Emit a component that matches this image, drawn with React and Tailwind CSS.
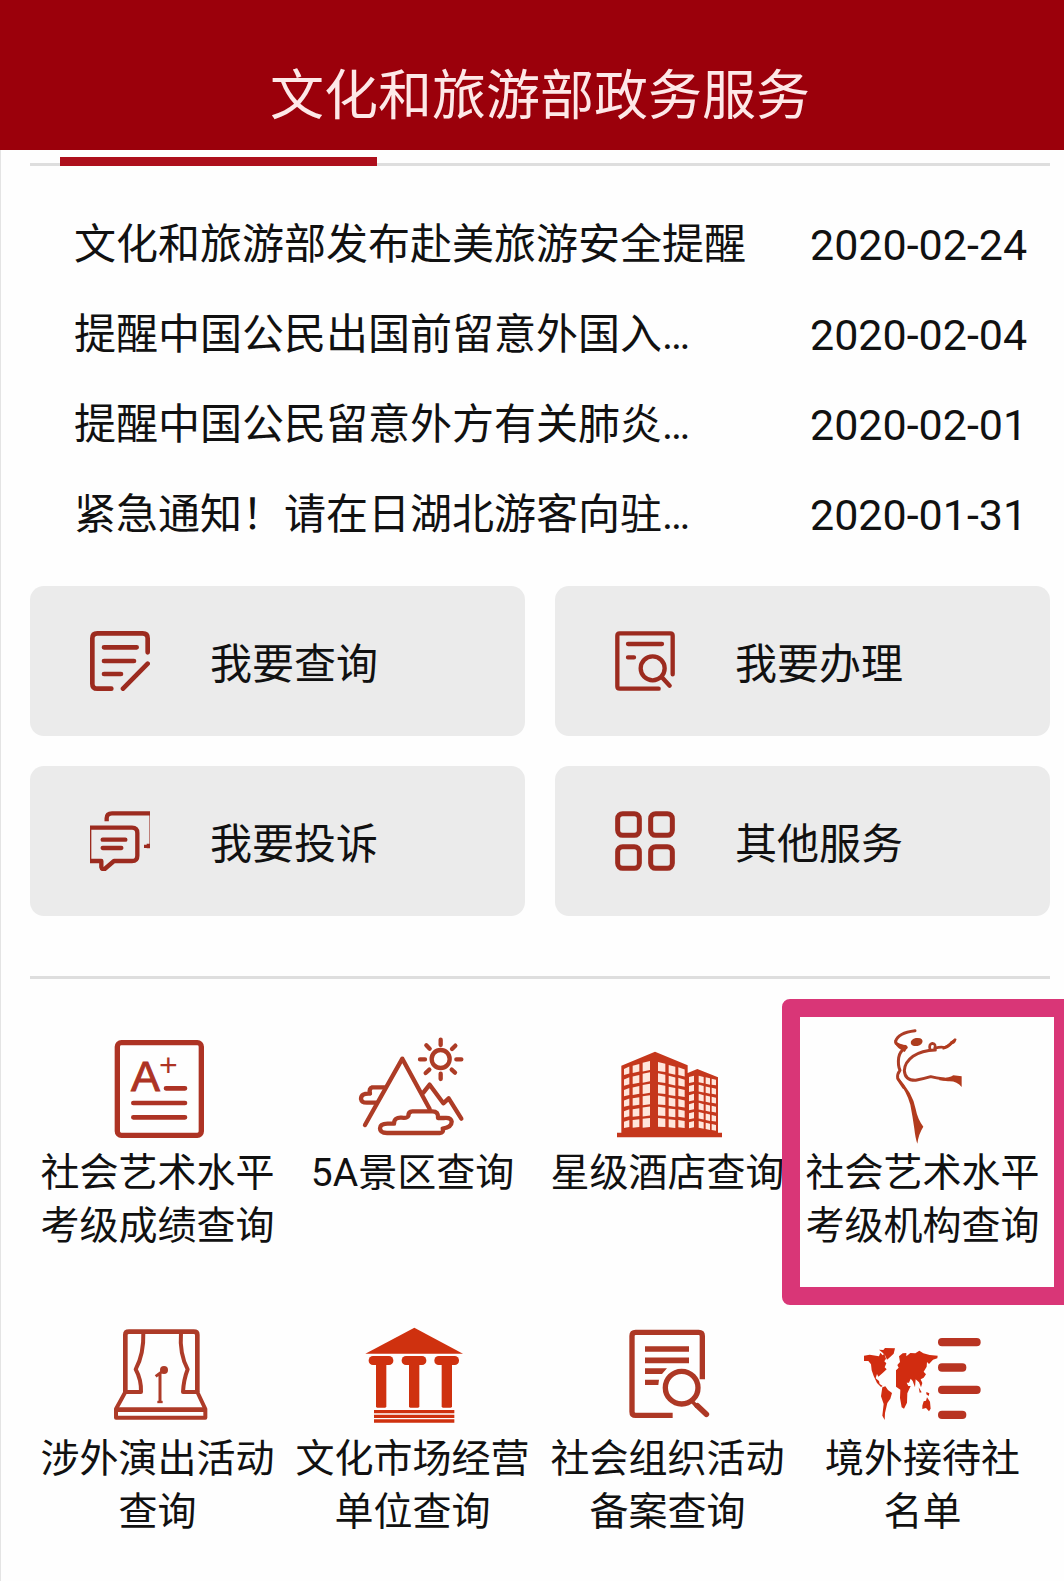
const FONT = "font-['Roboto','Noto_Sans_CJK_SC',sans-serif]";

const notices = [
  { title: "文化和旅游部发布赴美旅游安全提醒", date: "2020-02-24" },
  { title: "提醒中国公民出国前留意外国入…", date: "2020-02-04" },
  { title: "提醒中国公民留意外方有关肺炎…", date: "2020-02-01" },
  { title: "紧急通知！请在日湖北游客向驻…", date: "2020-01-31" },
];

function QueryIcon() {
  return (
    <svg className="size-15 shrink-0" viewBox="0 0 180 180" fill="none" stroke="#9c2b1f" strokeWidth="14" strokeLinecap="round" aria-hidden="true">
      <path d="M173 64V22Q173 7 158 7H22Q7 7 7 22V158Q7 173 22 173H64" />
      <path d="M42 49H140M42 90H132M42 129H93M99 173L173 98" />
    </svg>
  );
}

function HandleIcon() {
  return (
    <svg className="size-15 shrink-0" viewBox="0 0 180 180" fill="none" stroke="#9c2b1f" strokeWidth="13" strokeLinecap="round" aria-hidden="true">
      <path d="M173 130V14Q173 7 166 7H14Q7 7 7 14V166Q7 173 14 173H131" />
      <path d="M39 39H141M39 79H57M140 138L164 164" />
      <circle cx="113" cy="112" r="36" />
    </svg>
  );
}

function ComplaintIcon() {
  return (
    <svg className="size-15 shrink-0" viewBox="0 0 180 180" fill="none" stroke="#9c2b1f" strokeWidth="13" aria-hidden="true">
      <path d="M50 31V22Q50 7 66 7H180" />
      <path d="M179 8V100" strokeWidth="2" />
      <path d="M162 106H180M175 98V112" strokeWidth="10" />
      <path d="M0 50H126Q142 50 142 66V134Q142 150 126 150H72L44 174Q36 177 34 168V150H0" strokeLinejoin="round" />
      <path d="M2 46V154" strokeWidth="4" />
      <path d="M38 86H106M38 111H94" strokeLinecap="round" />
    </svg>
  );
}

function OtherIcon() {
  return (
    <svg className="size-15 shrink-0" viewBox="0 0 180 180" fill="none" stroke="#9c2b1f" strokeWidth="15" aria-hidden="true">
      <rect x="8" y="8" width="65" height="65" rx="15" />
      <rect x="107" y="8" width="65" height="65" rx="15" />
      <rect x="8" y="107" width="65" height="65" rx="15" />
      <rect x="107" y="107" width="65" height="65" rx="15" />
    </svg>
  );
}

function GradeIcon() {
  return (
    <svg className="size-30" viewBox="25 18 360 360" fill="none" stroke="#ad3324" strokeWidth="14" strokeLinecap="round" aria-hidden="true">
      <rect x="83" y="65" width="252" height="278" rx="12" strokeWidth="16" />
      <path d="M131 246H286M131 289H286M229 202H286" />
      <text x="124" y="209" fontSize="130" fill="#ad3324" strokeWidth="3" fontFamily="Liberation Sans, sans-serif">A</text>
      <text x="208" y="166" fontSize="96" fill="#ad3324" stroke="none" fontFamily="Liberation Sans, sans-serif">+</text>
    </svg>
  );
}

function ScenicIcon() {
  return (
    <svg className="size-30" viewBox="40 18 360 360" fill="none" stroke="#ad3c26" strokeWidth="13" strokeLinecap="round" strokeLinejoin="round" aria-hidden="true">
      <circle cx="303" cy="114" r="27" />
      <path d="M303 56V72M303 158V174M241 115H256M350 115H365M260 73L270 83M347 74L337 84M258 156L269 146M346 155L336 146" />
      <path d="M76 312L188 113L270 264" />
      <path d="M251 215L270 191L311 247L327 232L365 293" />
      <path d="M134 199H98Q87 203 91 218Q64 216 64 234Q66 246 84 245H109" />
      <path d="M142 336H300Q313 335 309 323Q336 318 336 302Q334 288 312 291H295Q297 271 278 271H218Q206 271 206 285Q203 292 186 290Q163 288 163 308H144Q121 308 121 322Q121 336 142 336Z" />
    </svg>
  );
}

function HotelIcon() {
  const floors = [0, 1, 2, 3, 4, 5];
  return (
    <svg className="size-30" viewBox="25 -12 360 360" aria-hidden="true">
      <path fill="#c5371c" d="M65 104L166 62L264 103V126L293 114L355 139V305H367V319H52V305H65Z" />
      <g fill="#ffe6dc">
        {floors.map((r) => {
          const y = 108 + r * 31.6;
          const s = (5 - r) * 2;
          return (
            <g key={r}>
              <path d={`M73 ${y + 6}l16 ${-5 - s / 4}v21l-16 ${3 + s / 6}z`} />
              <path d={`M99 ${y - s / 2 + 1}l20 ${-2 - s / 3}v23l-20 ${2 + s / 4}z`} />
              <path d={`M129 ${y - s - 3}l22 ${-2 - s / 3}v27l-22 ${2 + s / 4}z`} />
              <path d={`M175 ${y - s - 5}l22 ${2 + s / 3}v25l-22 ${-1 - s / 4}z`} />
              <path d={`M207 ${y - s / 2 - 1}l20 ${2 + s / 3}v24l-20 ${-2 - s / 4}z`} />
              <path d={`M236 ${y + 1}l19 ${3 + s / 3}v21l-19 ${-2 - s / 4}z`} />
            </g>
          );
        })}
        {floors.map((r) => {
          const y = 137 + r * 27.2;
          return (
            <g key={r}>
              <path d={`M268 ${y + 1}l15 -4v19l-15 3z`} />
              <path d={`M297 ${y - 3}l15 4v19l-15 -3z`} />
              <path d={`M318 ${y + 2}l13 3v19l-13 -3z`} />
              <path d={`M336 ${y + 6}l13 3v17l-13 -2z`} />
            </g>
          );
        })}
      </g>
    </svg>
  );
}

function DancerIcon() {
  return (
    <svg className="size-30" viewBox="280 110 360 360" fill="none" stroke="#ad3d26" strokeLinecap="round" strokeLinejoin="round" aria-hidden="true">
      <ellipse cx="441" cy="155" rx="18" ry="12" transform="rotate(-12 441 155)" fill="#ad3d1e" stroke="none" />
      <path strokeWidth="9" d="M436 121Q386 127 378 152Q376 160 388 164L410 171Q390 182 387 202Q384 224 391 240Q382 251 384 264Q392 276 402 291" />
      <path strokeWidth="9" d="M497 179Q456 180 430 198Q405 216 404 241Q406 271 438 270Q459 266 483 259Q499 263 523 266" />
      <path strokeWidth="8" d="M481 177Q477 162 488 159Q500 161 495 174Q516 168 523 172Q537 168 556 148" />
      <path fill="#b23b1d" stroke="none" d="M374 148Q379 163 410 164Q415 172 405 185L394 178Q376 168 374 148ZM519 178Q536 176 548 162Q560 157 560 145L543 153Q537 165 519 169ZM509 263Q538 264 551 255L576 258V290Q561 271 535 273L509 270ZM382 258Q429 307 438 356Q444 387 461 409Q447 430 443 460Q437 443 434 415Q429 379 422 343Q411 304 382 267Z" />
    </svg>
  );
}

function StageIcon() {
  return (
    <svg className="size-30" viewBox="25 9 360 360" fill="none" stroke="#ad3b28" strokeWidth="14" strokeLinejoin="round" aria-hidden="true">
      <path d="M107 246V74Q107 65 118 65H312Q323 65 323 74V246" />
      <path strokeWidth="12" d="M161 66Q163 132 138 178Q155 209 154 246H107L79 297V323H347V297L323 246H280Q282 209 294 178Q269 132 274 66" />
      <path d="M79 299H347" />
      <circle cx="223" cy="180" r="12" fill="#ad3b28" stroke="none" />
      <path strokeWidth="9" d="M221 182L198 199M211 192V276" />
      <path strokeWidth="7" d="M203 276H219" />
    </svg>
  );
}

function MarketIcon() {
  return (
    <svg className="size-30" viewBox="10 9 360 360" fill="#cf310f" aria-hidden="true">
      <path d="M194 53L340 131H47Z" />
      {[94, 193, 291].map((x) => (
        <g key={x}>
          <rect x={x - 37} y="138" width="74" height="27" rx="13" />
          <rect x={x - 15} y="150" width="31" height="143" rx="4" />
        </g>
      ))}
      <path d="M73 300H314V310H73ZM73 314H314V324H73ZM73 328H314V338H73Z" />
    </svg>
  );
}

function RecordIcon() {
  return (
    <svg className="size-30" viewBox="25 9 360 360" fill="none" stroke="#ad3825" strokeWidth="16" aria-hidden="true">
      <path d="M308 208V78Q308 67 297 67H108Q97 67 97 78V305Q97 316 108 316H219" />
      <path strokeWidth="17" d="M136 117H268M136 151H268" />
      <path fill="#ad3825" stroke="none" d="M136 175H202L187 192H136ZM136 209H178L176 225H136Z" />
      <circle cx="246" cy="233" r="49" />
      <path strokeWidth="11" d="M276 272L292 290" />
      <path strokeWidth="17" strokeLinecap="round" d="M293 287L320 313" />
    </svg>
  );
}

function OverseasIcon() {
  return (
    <svg className="size-30" viewBox="40 9 360 360" fill="#d12c10" aria-hidden="true">
      <path d="M43 137L60 134L88 139L92 128L99 136L104 131L109 146L104 154L110 160L105 172L111 178L99 189L86 200L82 192L78 205L88 213L90 222L99 228L94 231L82 219L72 198L66 181L64 163L56 153H43Z" />
      <path d="M88 119L101 120L106 114L136 115L132 131L119 143L112 149L107 137L99 128Z" />
      <path d="M98 232L107 229L115 240L127 249L122 266L113 279L106 309L105 330L98 317L102 282L94 259Z" />
      <path d="M139 181L147 173L143 165L151 156L148 139L159 130L170 129L170 139L182 129L197 130L209 122L221 130L240 135L264 137L263 145L250 149L238 162L232 156L231 170L222 185L229 193L222 203L213 208L218 219L214 232L208 217L198 208L196 232L189 213L183 206L178 218L171 218L176 228L183 228L173 250L172 278L163 296L156 292L151 264L152 239L139 230Z" />
      <path d="M218 287L222 274L229 272L232 262L241 275L243 296L238 304L229 294L218 297ZM230 246L239 250L237 258L230 253ZM207 232L216 247L210 248Z" />
      <g fill="#b83422">
        <rect x="265" y="84" width="128" height="25" rx="12" />
        <rect x="265" y="160" width="85" height="25" rx="12" />
        <rect x="265" y="227" width="128" height="25" rx="12" />
        <rect x="265" y="302" width="85" height="25" rx="12" />
      </g>
    </svg>
  );
}

const actions = [
  { label: "我要查询", Icon: QueryIcon },
  { label: "我要办理", Icon: HandleIcon },
  { label: "我要投诉", Icon: ComplaintIcon },
  { label: "其他服务", Icon: OtherIcon },
];

const services = [
  { lines: ["社会艺术水平", "考级成绩查询"], Icon: GradeIcon },
  { lines: ["5A景区查询"], Icon: ScenicIcon },
  { lines: ["星级酒店查询"], Icon: HotelIcon },
  { lines: ["社会艺术水平", "考级机构查询"], Icon: DancerIcon, highlighted: true },
  { lines: ["涉外演出活动", "查询"], Icon: StageIcon },
  { lines: ["文化市场经营", "单位查询"], Icon: MarketIcon },
  { lines: ["社会组织活动", "备案查询"], Icon: RecordIcon },
  { lines: ["境外接待社", "名单"], Icon: OverseasIcon },
];

export default function App() {
  return (
    <div lang="zh-CN" className={`min-h-screen overflow-hidden bg-[#fefefe] text-[#111] ${FONT}`}>
      <header className="bg-[#9b000b] pt-15 pr-3.5 pb-4 pl-7.5 text-center">
        <h1 className="text-[54px] leading-[74px] font-normal text-[#fde8e8]">文化和旅游部政务服务</h1>
      </header>

      <main className="border-l border-[#e4e4e4] pr-3.5 pl-7.25">
        <div className="border-b-3 border-[#dedede] pt-1.75 pl-7.5">
          <div className="-mb-0.75 h-2.25 w-[32%] bg-[#ad0f1c]" />
        </div>

        <ul className="pt-8.5 pr-6 pl-11">
          {notices.map((n) => (
            <li key={n.title}>
              <a href="#notice" className="flex h-22.5 items-center justify-between text-[42px] leading-none whitespace-nowrap">
                <span>{n.title}</span>
                <time className="w-[216px] text-[43px]" dateTime={n.date}>{n.date}</time>
              </a>
            </li>
          ))}
        </ul>

        <div className="mt-6.5 grid grid-cols-2 gap-7.5">
          {actions.map(({ label, Icon }) => (
            <button key={label} type="button" className="flex h-[150px] items-center gap-15 rounded-[14px] bg-[#ebebeb] pl-15 text-[42px] leading-none">
              <Icon />
              <span className="pt-2">{label}</span>
            </button>
          ))}
        </div>

        <nav className="mt-15 grid grid-cols-4 border-t-3 border-[#dedede] pt-12">
          {services.map(({ lines, Icon, highlighted }) => (
            <a key={lines.join("")} href="#service" className="relative flex h-[286px] flex-col items-center text-center text-[39px] leading-[53px] whitespace-nowrap">
              <Icon />
              {lines.map((line) => (
                <span key={line}>{line}</span>
              ))}
              {highlighted && (
                <span aria-hidden="true" className="pointer-events-none absolute -top-7 -right-5.5 bottom-2 -left-3.25 rounded-lg border-18 border-[#d93677]" />
              )}
            </a>
          ))}
        </nav>
      </main>
    </div>
  );
}
